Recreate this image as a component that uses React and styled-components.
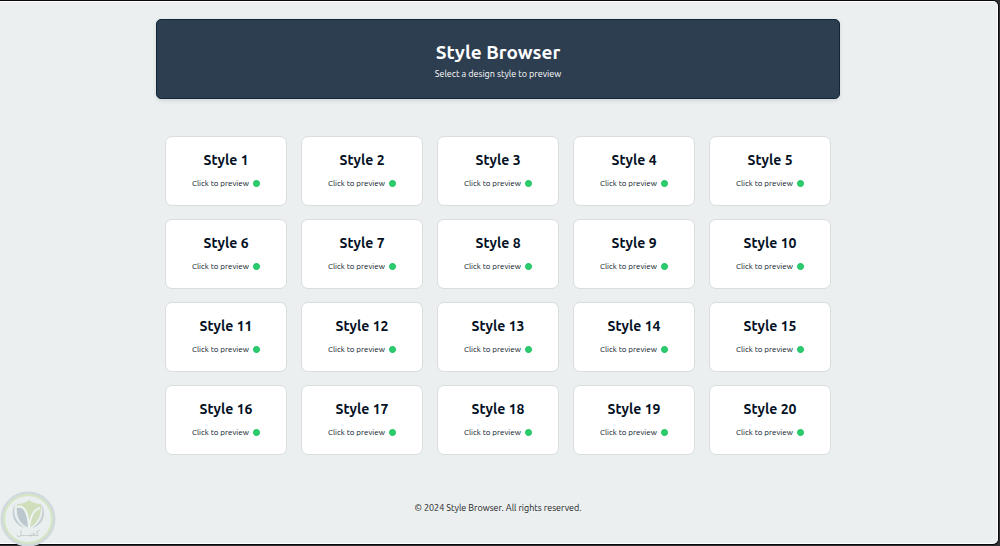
import React from "react";
import styled, { createGlobalStyle } from "styled-components";

const GlobalStyle = createGlobalStyle`
    * {
        box-sizing: border-box;
    }

    body {
        margin: 0;
        background: #303033;
        font-family: Ubuntu, "Noto Sans", sans-serif;
    }
`;

const Window = styled.div`
    display: flex;
    flex-direction: column;
    min-height: calc(100vh - 3px);
    margin: 1px 2px 2px 0;
    padding: 17px 1px 0 0;
    background: #ebeff0;
    border: 1px solid #fff;
    border-left: 0;
    border-radius: 0 5px 5px 0;
    box-shadow: 0 0 0 1px #08080a;
`;

const Container = styled.div`
    width: 100%;
    max-width: 684px;
    margin: 0 auto;
`;

const Header = styled.header`
    height: 80px;
    padding-top: 19px;
    background: #2d3e50;
    color: #fff;
    text-align: center;
    border: 1px solid #10263a;
    border-radius: 5px;
    box-shadow: 0 2px 4px rgba(0,0,0,.1);
`;

const Title = styled.h1`
    margin: 0;
    font-size: 19px;
    line-height: 26px;
    font-weight: bold;
`;

const Subtitle = styled.p`
    margin: 0;
    font-size: 9px;
    line-height: 18px;
`;

const Grid = styled.main`
    display: grid;
    grid-template-columns: repeat(5, 1fr);
    gap: 13px 14px;
    margin-top: 37px;
    padding: 0 9px;
`;

const Card = styled.button`
    height: 70px;
    padding: 0;
    background: #fff;
    color: #051124;
    font-family: inherit;
    text-align: center;
    border: 1px solid #d9dddf;
    border-radius: 7px;
    cursor: pointer;
`;

const CardTitle = styled.div`
    font-size: 14px;
    line-height: 20px;
    font-weight: bold;
`;

const CardHint = styled.div`
    display: flex;
    align-items: center;
    justify-content: center;
    gap: 4px;
    margin-top: 6px;
    font-size: 8px;
    line-height: 16px;
`;

const StatusDot = styled.span`
    width: 7px;
    height: 7px;
    margin-bottom: 1px;
    background: #2ecc71;
    border: 1px solid #12c25a;
    border-radius: 50%;
`;

const Footer = styled.footer`
    margin-top: 44px;
    color: #222;
    font-size: 9px;
    line-height: 18px;
    text-align: center;
`;

const Badge = styled.svg`
    position: fixed;
    left: 0;
    bottom: 0;
    width: 56px;
    height: 56px;
    pointer-events: none;
`;

const styles = Array.from({ length: 20 }, (_, i) => i + 1);

function StyleCard(props) {
    return <Card type="button">
        <CardTitle>Style {props.number}</CardTitle>
        <CardHint>Click to preview <StatusDot /></CardHint>
    </Card>
}

function ShieldBadge() {
    return <Badge viewBox="0 0 56 56" aria-hidden="true">
        <circle cx="28" cy="29" r="26" fill="#e9eeee" stroke="#d0dadd" strokeWidth="3" />
        <circle cx="28" cy="29" r="24" fill="none" stroke="#d5e5c3" strokeWidth="2" />
        <path d="M15 14C10 22 13 35 25 38C17 33 12 25 15 14Z" fill="#c3ced3" />
        <path d="M41 14C47 22 44 35 32 38C40 33 45 25 41 14Z" fill="#c3ced3" />
        <path d="M17 14Q24 14 29 10Q34 14 41 14C42 25 38 33 29 38C19 33 16 25 17 14Z" fill="#cfdfbc" />
        <path d="M17 17C23 17 27 22 29 38C20 34 16 27 17 17Z" fill="#bac7cd" />
        <path d="M17 17C24 15 28 21 29 38C30 28 33 20 40 18" fill="none" stroke="#edf2f1" strokeWidth="2" />
        <text x="28" y="46" fill="#bdc8cc" fontFamily="DejaVu Sans" fontSize="8" textAnchor="middle">كفيـــل</text>
    </Badge>
}

export default function App() {
    return <React.Fragment>
        <GlobalStyle />
        <Window>
            <Container>
                <Header>
                    <Title>Style Browser</Title>
                    <Subtitle>Select a design style to preview</Subtitle>
                </Header>
                <Grid>
                    {styles.map(number => <StyleCard key={number} number={number} />)}
                </Grid>
                <Footer>© 2024 Style Browser. All rights reserved.</Footer>
            </Container>
        </Window>
        <ShieldBadge />
    </React.Fragment>
}
